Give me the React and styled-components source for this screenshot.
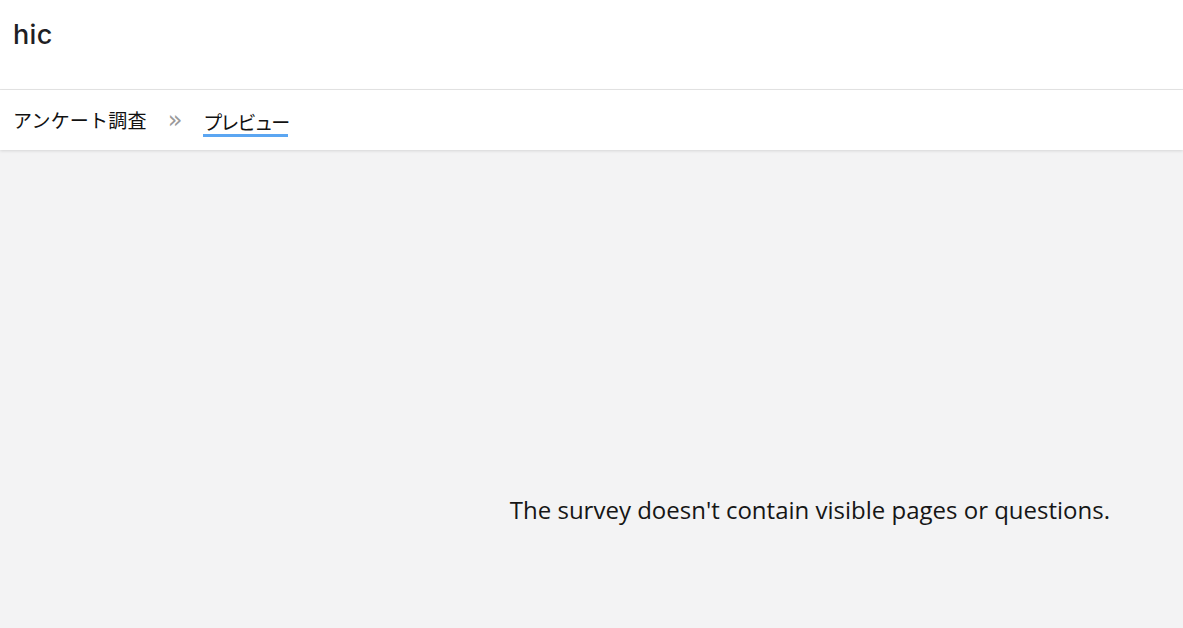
import React from 'react'
import styled, { createGlobalStyle } from 'styled-components'

const GlobalStyle = createGlobalStyle`
    html, body {
        margin: 0;
        padding: 0;
        height: 100%;
        background: #f3f3f4;
    }
    #root {
        min-height: 100%;
        display: flex;
        flex-direction: column;
    }
`
const Header = styled.header`
    height: 89px;
    background: #ffffff;
    border-bottom: 1px solid #e6e6e6;
    display: flex;
    align-items: center;
    padding: 0 13px;
    box-sizing: content-box;
`
const Brand = styled.div`
    font-family: Inter, "Noto Sans", sans-serif;
    font-size: 27px;
    font-weight: 500;
    color: #1f1f24;
    margin-top: -20px;
    letter-spacing: 0.3px;
`
const Crumbs = styled.nav`
    height: 60px;
    background: #ffffff;
    box-shadow: 0 1px 3px rgba(0, 0, 0, 0.12);
    display: flex;
    align-items: center;
    gap: 21px;
    padding: 0 13px;
    font-family: "Noto Sans CJK JP", "Noto Sans", sans-serif;
    font-size: 19px;
    color: #111;
    position: relative;
    z-index: 1;
`
const Crumb = styled.span`
    padding: 4px 0 3px;
    line-height: 1;
    letter-spacing: ${({ active }) => (active ? '-2px' : '0.2px')};
    border-bottom: 3px solid ${({ active }) => (active ? '#5ba6f2' : 'transparent')};
    margin-top: ${({ active }) => (active ? '5px' : '0')};
`
const Sep = styled.span`
    color: #9a9a9a;
    font-family: "DejaVu Sans", sans-serif;
    font-size: 24px;
    line-height: 1;
`
const Body = styled.main`
    flex: 1;
    display: flex;
    justify-content: flex-end;
    padding: 343px 73px 0 0;
`
const Empty = styled.div`
    font-family: "Open Sans", sans-serif;
    font-size: 24px;
    color: #161616;
`

export default function App() {
    return (
        <>
            <GlobalStyle />
            <Header>
                <Brand>hic</Brand>
            </Header>
            <Crumbs>
                <Crumb>アンケート調査</Crumb>
                <Sep>»</Sep>
                <Crumb active>プレビュー</Crumb>
            </Crumbs>
            <Body>
                <Empty>The survey doesn't contain visible pages or questions.</Empty>
            </Body>
        </>
    )
}
